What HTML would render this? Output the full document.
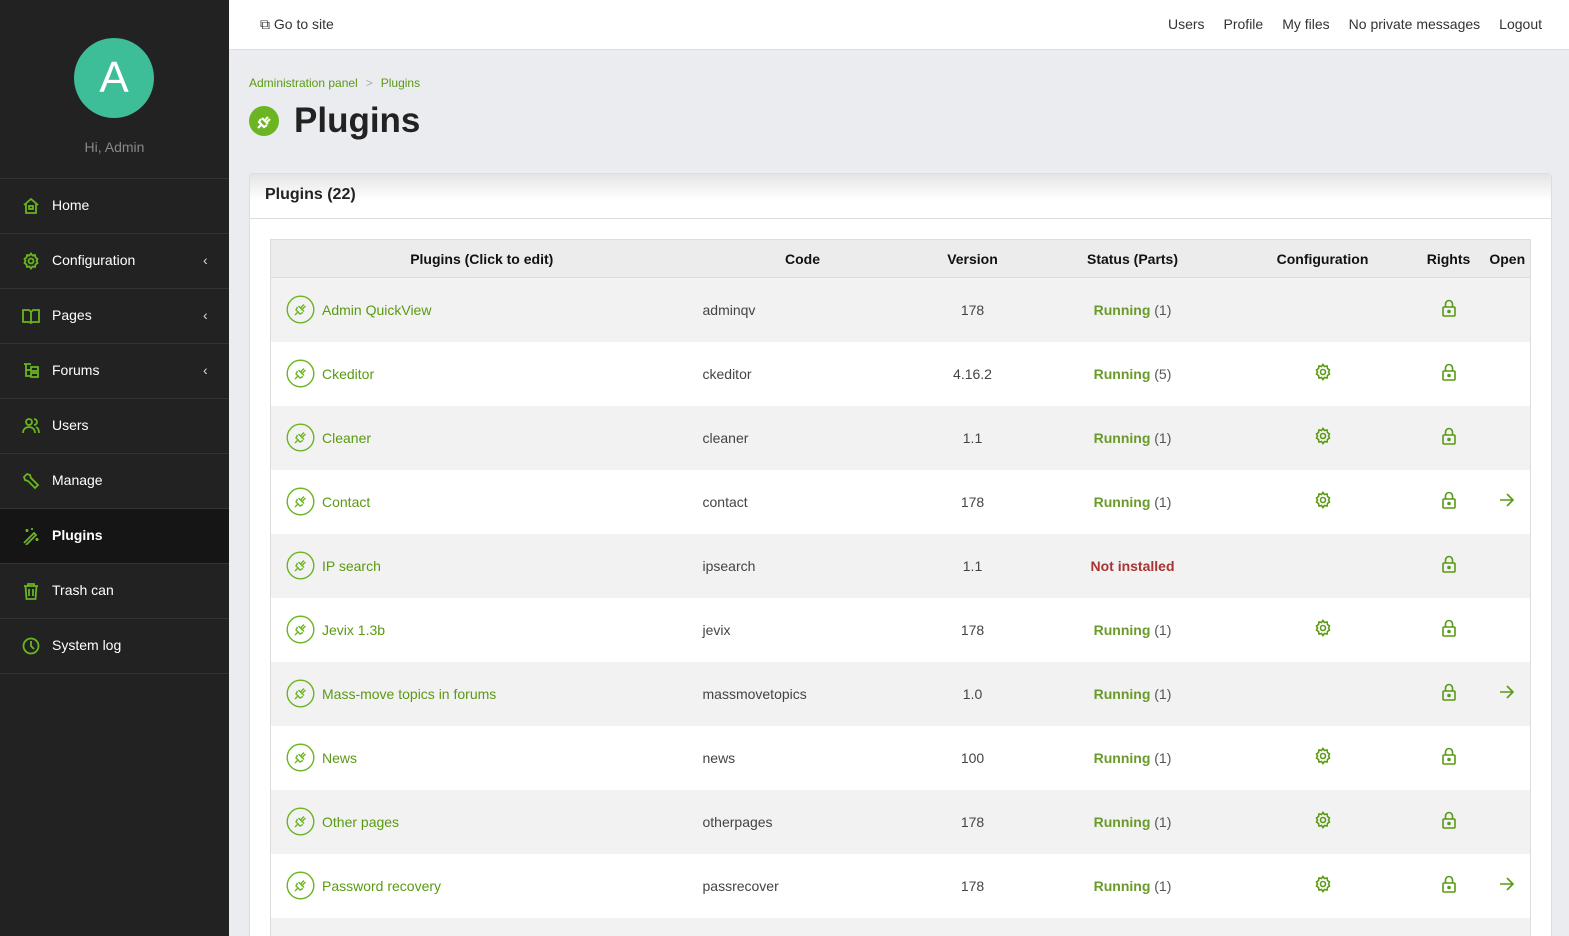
<!DOCTYPE html>
<html><head><meta charset="utf-8"><style>
*{box-sizing:border-box;margin:0;padding:0}
html{width:1569px;height:936px;overflow:hidden}
body{width:1569px;height:936px;overflow:hidden;font-family:"Liberation Sans",sans-serif;background:#ebecf0;position:relative;font-size:14px;color:#333}
.side{position:absolute;left:0;top:0;width:229px;height:936px;background:#222}
.av{position:absolute;left:74px;top:38px;width:80px;height:80px;border-radius:50%;background:#3dbe98;color:#fff;font-size:44px;text-align:center;line-height:80px}
.hi{position:absolute;top:139px;width:229px;text-align:center;color:#888;font-size:14px}
.nav{position:absolute;top:178px;left:0;width:229px;border-top:1px solid #333}
.nav div{height:55px;border-bottom:1px solid #333;position:relative;color:#fff;font-size:14px;line-height:53px;padding-left:52px}
.nav div.act{background:#151515;font-weight:bold}
.nav svg{position:absolute;left:22px;top:18px}
.nav .ch{position:absolute;left:203px;top:0;color:#ddd;font-size:14px}
.top{position:absolute;left:229px;top:0;right:0;height:50px;background:#fff;border-bottom:1px solid #ddd}
.top .l{position:absolute;left:31px;top:16px;color:#333;font-size:14px}
.top .r{position:absolute;right:27px;top:16px;font-size:14px;color:#333}
.top .r span{margin-left:19px}
.bc{position:absolute;left:249px;top:76px;font-size:12px;color:#5a9a12}
.bc i{color:#aaa;font-style:normal;margin:0 8px}
.h1{position:absolute;left:249px;top:101px;font-size:35px;font-weight:bold;color:#222}
.h1 .c{position:absolute;left:0;top:5px;width:30px;height:30px;border-radius:50%;background:#6ab521}
.h1 span{position:absolute;left:45px;top:0;white-space:nowrap}
.panel{position:absolute;left:249px;top:173px;width:1303px;height:800px;background:#fff;border:1px solid #ddd;border-radius:4px}
.ph{height:45px;border-bottom:1px solid #ddd;background:linear-gradient(#e4e4e4,#fff 60%);font-weight:bold;font-size:16px;padding:12px 15px;color:#222}
table{position:absolute;left:20px;top:65px;width:1261px;border-collapse:collapse;border:1px solid #ddd}
th{height:38px;background:#ececec;font-size:14px;color:#111;border-bottom:1px solid #ddd}
td{height:64px;font-size:14px;color:#444}
tr:nth-child(odd) td{background:#f2f2f2}
tr:nth-child(even) td{background:#fff}
.nm{padding-left:15px;color:#5a9a12}
.nm span{display:flex;align-items:center}
.nm svg{margin-right:7px}
.cd{padding-left:10px}
.c{text-align:center}
.run{color:#6a9a2a;font-weight:bold}
.run i{font-style:normal;font-weight:normal;color:#555}
.ni{color:#a33;font-weight:bold}
</style></head><body>
<div class="side">
<div class="av">A</div>
<div class="hi">Hi, Admin</div>
<div class="nav">
<div><svg width="18" height="18" viewBox="0 0 18 18" fill="none" stroke="#6ab521" stroke-width="1.8"><path d="M2 8L9 2l7 6M4 7v9h10V7"/><rect x="7" y="9" width="4" height="3"/></svg>Home</div>
<div><svg width="18" height="18" viewBox="0 0 18 18" fill="none" stroke="#6ab521" stroke-width="1.8"><circle cx="9" cy="9" r="2.5"/><path d="M9 1.5l1.5 2 2.5-.5.5 2.5 2 1.5-1 2 1 2-2 1.5-.5 2.5-2.5-.5L9 16.5l-1.5-2-2.5.5-.5-2.5-2-1.5 1-2-1-2 2-1.5.5-2.5 2.5.5z"/></svg>Configuration<span class="ch">‹</span></div>
<div><svg width="18" height="18" viewBox="0 0 18 18" fill="none" stroke="#6ab521" stroke-width="1.8"><path d="M1 3h6l2 2 2-2h6v12h-6l-2 1-2-1H1zM9 5v11"/></svg>Pages<span class="ch">‹</span></div>
<div><svg width="18" height="18" viewBox="0 0 18 18" fill="none" stroke="#6ab521" stroke-width="1.8"><path d="M2 2h7M4 2v12h4M4 8h4"/><rect x="9" y="5" width="7" height="4"/><rect x="9" y="11" width="7" height="4"/></svg>Forums<span class="ch">‹</span></div>
<div><svg width="18" height="18" viewBox="0 0 18 18" fill="none" stroke="#6ab521" stroke-width="1.8"><circle cx="7" cy="5" r="3"/><path d="M1 16c0-4 3-6 6-6s6 2 6 6M12 2a3 3 0 010 6M14 10c2 1 3 3 3 6"/></svg>Users</div>
<div><svg width="18" height="18" viewBox="0 0 18 18" fill="none" stroke="#6ab521" stroke-width="1.8"><path d="M2 5l3-3 3 1 1 3 7 7-3 3-7-7-3-1z"/></svg>Manage</div>
<div class="act"><svg width="18" height="18" viewBox="0 0 18 18" fill="none" stroke="#6ab521" stroke-width="1.8"><path d="M2 16L12 6l2 2L4 18M5 2v3M3.5 3.5h3M15 11v3M13.5 12.5h3M10 1v2"/></svg>Plugins</div>
<div><svg width="18" height="18" viewBox="0 0 18 18" fill="none" stroke="#6ab521" stroke-width="1.8"><path d="M2 4h14M6 4V2h6v2M3.5 4l1 13h9l1-13M7 7v7M11 7v7"/></svg>Trash can</div>
<div><svg width="18" height="18" viewBox="0 0 18 18" fill="none" stroke="#6ab521" stroke-width="1.8"><circle cx="9" cy="9" r="7.5"/><path d="M9 4v5l3 3"/></svg>System log</div>
</div></div>
<div class="top"><div class="l">⧉ Go to site</div><div class="r"><span>Users</span><span>Profile</span><span>My files</span><span>No private messages</span><span>Logout</span></div></div>
<div class="bc">Administration panel<i>&gt;</i>Plugins</div>
<div class="h1"><div class="c"><svg width="30" height="30" viewBox="0 0 30 30" fill="none" stroke="#fff" stroke-width="2.2"><path d="M9 21l3-3M13 11l6 6M12 12l-2 3 5 5 3-2M16 13l3-3M18 15l3-3"/></svg></div><span>Plugins</span></div>
<div class="panel"><div class="ph">Plugins (22)</div>
<table>
<tr><th style="width:422px">Plugins (Click to edit)</th><th style="width:220px;text-align:center">Code</th><th style="width:120px">Version</th><th style="width:200px">Status (Parts)</th><th style="width:180px">Configuration</th><th style="width:72px">Rights</th><th>Open</th></tr>
</table>
</div>
<script>
var rows=[["Admin QuickView","adminqv","178","R1",0,0],["Ckeditor","ckeditor","4.16.2","R5",1,0],["Cleaner","cleaner","1.1","R1",1,0],["Contact","contact","178","R1",1,1],["IP search","ipsearch","1.1","N",0,0],["Jevix 1.3b","jevix","178","R1",1,0],["Mass-move topics in forums","massmovetopics","1.0","R1",0,1],["News","news","100","R1",1,0],["Other pages","otherpages","178","R1",1,0],["Password recovery","passrecover","178","R1",1,1],["","","","",0,0]];
var plug='<svg width="29" height="29" viewBox="0 0 29 29" fill="none" stroke="#6ab521" stroke-width="1.4"><circle cx="14.5" cy="14.5" r="13.3"/><path d="M9 20l3-3M12.5 11l5.5 5.5M11.5 12l-1.5 3 4 4 3-1.5M15 12.5l3-3M16.5 14l3-3"/></svg>';
var gear='<svg width="18" height="18" viewBox="0 0 18 18" fill="none" stroke="#5a9a12" stroke-width="1.6"><circle cx="9" cy="9" r="2.5"/><path d="M9 1.5l1.5 2 2.5-.5.5 2.5 2 1.5-1 2 1 2-2 1.5-.5 2.5-2.5-.5L9 16.5l-1.5-2-2.5.5-.5-2.5-2-1.5 1-2-1-2 2-1.5.5-2.5 2.5.5z"/></svg>';
var lock='<svg width="16" height="18" viewBox="0 0 16 18" fill="none" stroke="#5a9a12" stroke-width="1.6"><rect x="2" y="8" width="12" height="9" rx="1"/><path d="M4.5 8V5a3.5 3.5 0 017 0v3"/><circle cx="8" cy="12.5" r="1" fill="#5a9a12"/></svg>';
var arr='<svg width="16" height="14" viewBox="0 0 16 14" fill="none" stroke="#5a9a12" stroke-width="1.6"><path d="M1 7h13M8 1l6 6-6 6"/></svg>';
var t=document.querySelector('table'),h='';
rows.forEach(function(r){
var st=r[3]=="N"?'<span class="ni">Not installed</span>':r[3]?'<span class="run">Running <i>('+r[3].slice(1)+')</i></span>':'';
h+='<tr><td class="nm">'+(r[0]?'<span>'+plug+r[0]+'</span>':'')+'</td><td class="cd">'+r[1]+'</td><td class="c">'+r[2]+'</td><td class="c">'+st+'</td><td class="c">'+(r[4]?gear:'')+'</td><td class="c">'+(r[0]?lock:'')+'</td><td class="c">'+(r[5]?arr:'')+'</td></tr>';});
t.insertAdjacentHTML('beforeend',h);
</script>
</body></html>
